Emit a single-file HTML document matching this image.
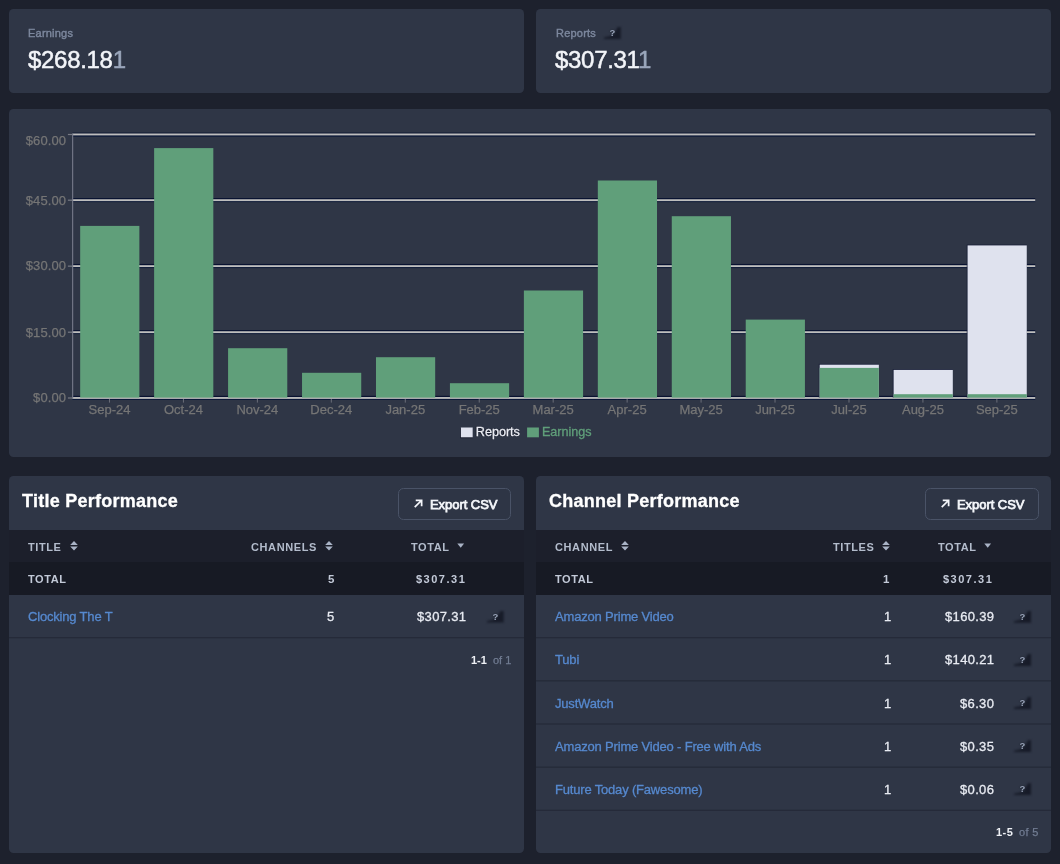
<!DOCTYPE html>
<html><head><meta charset="utf-8"><title>Dashboard</title><style>
html,body{margin:0;padding:0}
body{width:1060px;height:864px;background:#1d212d;position:relative;overflow:hidden;font-family:"Liberation Sans",sans-serif;}
.abs,.card,.t,.q,.btn,.sep,.chart{position:absolute}
.chart{left:0;top:0}
.card{background:#2f3646;border-radius:4.5px}
.t{white-space:nowrap;line-height:1;margin:0;padding:0;will-change:transform}
.lab{color:#7d889e;-webkit-text-stroke:0.4px #7d889e;letter-spacing:0.22px}
.big{color:#f3f5f9;letter-spacing:-0.3px;-webkit-text-stroke:0.5px #f3f5f9}
.big .dim{color:#9aa6bb;-webkit-text-stroke:0.5px #9aa6bb}
.h2{color:#fff;font-weight:bold;letter-spacing:0.25px;-webkit-text-stroke:0.3px #fff}
.btn{width:111.8px;height:29.6px;border:1px solid #4a5367;border-radius:5.5px;background:#2e3545}
.btnt{color:#f4f6fa;letter-spacing:-0.05px;-webkit-text-stroke:0.75px #f4f6fa}
.th{color:#b3bccc;font-weight:bold;letter-spacing:0.6px}
.tt{color:#c3cad8;font-weight:bold;letter-spacing:0.6px}
.ttn{letter-spacing:1.5px}
.lnk{color:#5689cf;letter-spacing:-0.18px;-webkit-text-stroke:0.3px #5689cf}
.num{color:#e8ebf2;letter-spacing:0.35px;-webkit-text-stroke:0.3px #e8ebf2}
.pg{color:#eef0f5;font-weight:bold;letter-spacing:0.5px}
.pgd{color:#717c92;letter-spacing:0.3px;-webkit-text-stroke:0.25px #717c92}
.sep{width:515px;height:1.2px;background:#262c3a}
.q{width:17px;height:12px}
.q i{position:absolute;left:-3px;top:-3px;width:23px;height:18px;filter:blur(1.3px)}
.q u{position:absolute;left:3px;top:3px;width:17px;height:12px;background:rgba(18,22,34,0.82);clip-path:polygon(0 100%,100% 100%,100% 0,82% 0,55% 70%,0 88%)}
.q b{will-change:transform;position:absolute;left:0;top:1.2px;width:17px;text-align:center;font-size:9.5px;line-height:10px;color:#9aa5ba;font-weight:bold;text-shadow:0 0 1.5px #141824}
</style></head><body>
<div class="card" style="left:9px;top:9px;width:515px;height:83.6px"></div>
<div class="card" style="left:536px;top:9px;width:515px;height:83.6px"></div>
<div class="card" style="left:9px;top:108.6px;width:1042px;height:348px"></div>
<div class="card" style="left:9px;top:476px;width:515px;height:376.8px"></div>
<div class="card" style="left:536px;top:476px;width:515px;height:376.8px"></div>
<div class="t lab" style="left:28.4px;top:28.00px;font-size:11px;">Earnings</div>
<div class="t big" style="left:28.3px;top:48.00px;font-size:24px;">$268.18<span class="dim">1</span></div>
<div class="t lab" style="left:555.5px;top:28.00px;font-size:11px;">Reports</div>
<div class="t big" style="left:555.4px;top:48.00px;font-size:24px;">$307.31<span class="dim">1</span></div>
<div class="q" style="left:603.8px;top:27.0px"><i><u></u></i><b>?</b></div>
<svg class="chart" width="1060" height="864" viewBox="0 0 1060 864">
<rect x="72.5" y="395.80" width="962.70" height="1.4" fill="#071230" opacity="0.95"/>
<rect x="72.5" y="398.90" width="962.70" height="1.1" fill="#081638" opacity="0.95"/>
<rect x="67.9" y="397.40" width="4.6" height="1.2" fill="#777a84"/>
<rect x="72.5" y="397.05" width="962.70" height="1.8" fill="#bebebe"/>
<rect x="72.5" y="330.00" width="962.70" height="1.4" fill="#071230" opacity="0.95"/>
<rect x="72.5" y="333.10" width="962.70" height="1.1" fill="#081638" opacity="0.7"/>
<rect x="67.9" y="331.60" width="4.6" height="1.2" fill="#777a84"/>
<rect x="72.5" y="331.25" width="962.70" height="1.8" fill="#bebebe"/>
<rect x="72.5" y="263.95" width="962.70" height="1.4" fill="#071230" opacity="0.95"/>
<rect x="72.5" y="267.05" width="962.70" height="1.1" fill="#081638" opacity="0.7"/>
<rect x="67.9" y="265.55" width="4.6" height="1.2" fill="#777a84"/>
<rect x="72.5" y="265.20" width="962.70" height="1.8" fill="#bebebe"/>
<rect x="72.5" y="198.00" width="962.70" height="1.4" fill="#071230" opacity="0.95"/>
<rect x="72.5" y="201.10" width="962.70" height="1.1" fill="#081638" opacity="0.7"/>
<rect x="67.9" y="199.60" width="4.6" height="1.2" fill="#777a84"/>
<rect x="72.5" y="199.25" width="962.70" height="1.8" fill="#bebebe"/>
<rect x="72.5" y="132.30" width="962.70" height="1.4" fill="#071230" opacity="0.55"/>
<rect x="72.5" y="135.40" width="962.70" height="1.3" fill="#081638" opacity="0.95"/>
<rect x="67.9" y="133.90" width="4.6" height="1.2" fill="#777a84"/>
<rect x="72.5" y="133.55" width="962.70" height="1.8" fill="#bebebe"/>
<rect x="72.1" y="133.60" width="1.1" height="265.30" fill="#777b8a"/>
<rect x="108.97" y="399.0" width="1" height="3.6" fill="#6a6d78"/>
<rect x="182.93" y="399.0" width="1" height="3.6" fill="#6a6d78"/>
<rect x="256.88" y="399.0" width="1" height="3.6" fill="#6a6d78"/>
<rect x="330.82" y="399.0" width="1" height="3.6" fill="#6a6d78"/>
<rect x="404.78" y="399.0" width="1" height="3.6" fill="#6a6d78"/>
<rect x="478.73" y="399.0" width="1" height="3.6" fill="#6a6d78"/>
<rect x="552.67" y="399.0" width="1" height="3.6" fill="#6a6d78"/>
<rect x="626.62" y="399.0" width="1" height="3.6" fill="#6a6d78"/>
<rect x="700.58" y="399.0" width="1" height="3.6" fill="#6a6d78"/>
<rect x="774.52" y="399.0" width="1" height="3.6" fill="#6a6d78"/>
<rect x="848.48" y="399.0" width="1" height="3.6" fill="#6a6d78"/>
<rect x="922.43" y="399.0" width="1" height="3.6" fill="#6a6d78"/>
<rect x="996.38" y="399.0" width="1" height="3.6" fill="#6a6d78"/>
<rect x="80.17" y="225.90" width="59.2" height="171.70" fill="#609f7a"/>
<rect x="154.12" y="148.10" width="59.2" height="249.50" fill="#609f7a"/>
<rect x="228.08" y="348.20" width="59.2" height="49.40" fill="#609f7a"/>
<rect x="302.03" y="372.80" width="59.2" height="24.80" fill="#609f7a"/>
<rect x="375.98" y="357.20" width="59.2" height="40.40" fill="#609f7a"/>
<rect x="449.93" y="383.20" width="59.2" height="14.40" fill="#609f7a"/>
<rect x="523.88" y="290.50" width="59.2" height="107.10" fill="#609f7a"/>
<rect x="597.82" y="180.50" width="59.2" height="217.10" fill="#609f7a"/>
<rect x="671.77" y="216.20" width="59.2" height="181.40" fill="#609f7a"/>
<rect x="745.73" y="319.60" width="59.2" height="78.00" fill="#609f7a"/>
<rect x="818.77" y="363.90" width="60.1" height="33.70" fill="#141a33" opacity="0.8"/>
<rect x="819.67" y="364.70" width="59.2" height="32.90" fill="#dfe2ee"/>
<rect x="819.67" y="367.90" width="59.2" height="29.70" fill="#609f7a"/>
<rect x="892.73" y="369.10" width="60.1" height="28.50" fill="#141a33" opacity="0.8"/>
<rect x="893.62" y="369.90" width="59.2" height="27.70" fill="#dfe2ee"/>
<rect x="893.62" y="394.20" width="59.2" height="3.40" fill="#609f7a"/>
<rect x="966.68" y="244.60" width="60.1" height="153.00" fill="#141a33" opacity="0.8"/>
<rect x="967.58" y="245.40" width="59.2" height="152.20" fill="#dfe2ee"/>
<rect x="967.58" y="394.20" width="59.2" height="3.40" fill="#609f7a"/>
<g font-family="Liberation Sans, sans-serif" font-size="13" fill="#757575" stroke="#757575" stroke-width="0.25">
<text x="109.47" y="414.2" text-anchor="middle">Sep-24</text>
<text x="183.43" y="414.2" text-anchor="middle">Oct-24</text>
<text x="257.38" y="414.2" text-anchor="middle">Nov-24</text>
<text x="331.32" y="414.2" text-anchor="middle">Dec-24</text>
<text x="405.28" y="414.2" text-anchor="middle">Jan-25</text>
<text x="479.23" y="414.2" text-anchor="middle">Feb-25</text>
<text x="553.17" y="414.2" text-anchor="middle">Mar-25</text>
<text x="627.12" y="414.2" text-anchor="middle">Apr-25</text>
<text x="701.08" y="414.2" text-anchor="middle">May-25</text>
<text x="775.02" y="414.2" text-anchor="middle">Jun-25</text>
<text x="848.98" y="414.2" text-anchor="middle">Jul-25</text>
<text x="922.93" y="414.2" text-anchor="middle">Aug-25</text>
<text x="996.88" y="414.2" text-anchor="middle">Sep-25</text>
<text x="66.2" y="402.30" text-anchor="end" letter-spacing="0.12">$0.00</text>
<text x="66.2" y="336.50" text-anchor="end" letter-spacing="0.12">$15.00</text>
<text x="66.2" y="270.45" text-anchor="end" letter-spacing="0.12">$30.00</text>
<text x="66.2" y="204.50" text-anchor="end" letter-spacing="0.12">$45.00</text>
<text x="66.2" y="144.50" text-anchor="end" letter-spacing="0.12">$60.00</text>
</g>
<rect x="460.2" y="428.2" width="12.4" height="10" fill="#141828"/>
<rect x="460.9" y="427.5" width="11.8" height="9.8" fill="#dfe2ee"/>
<rect x="527.1" y="427.5" width="11.8" height="9.8" fill="#609f7a"/>
<g font-family="Liberation Sans, sans-serif" font-size="12.6">
<text x="475.1" y="436.4" fill="#0c0f1a" stroke="#0c0f1a" stroke-width="0.5">Reports</text>
<text x="475.8" y="435.6" fill="#eceef5" stroke="#eceef5" stroke-width="0.3">Reports</text>
<text x="541.9" y="435.6" fill="#609f7a" stroke="#609f7a" stroke-width="0.3">Earnings</text>
</g>
</svg>
<div class="t h2" style="left:22.3px;top:492.00px;font-size:18px;">Title Performance</div>
<div class="btn" style="left:398.1px;top:488.1px;width:111.1px"></div>
<svg class="abs" style="left:414.4px;top:499.3px" width="9.2" height="9.2" viewBox="0 0 10 10"><path d="M0.8 8.9 L7.8 1.9 M1.9 1.4 L8.3 1.4 L8.3 7.8" stroke="#f4f6fa" stroke-width="1.9" fill="none" stroke-linecap="butt" stroke-linejoin="miter"/></svg>
<div class="t btnt" style="left:430.2px;top:498.00px;font-size:13px;">Export CSV</div>
<div class="abs" style="left:9px;top:530.1px;width:515px;height:32.2px;background:#1c1f2b"></div>
<div class="abs" style="left:9px;top:562.2px;width:515px;height:32.8px;background:#171a24"></div>
<div class="t h2" style="left:549.3px;top:492.00px;font-size:18px;">Channel Performance</div>
<div class="btn" style="left:925.1px;top:488.1px;width:111.6px"></div>
<svg class="abs" style="left:941.4px;top:499.3px" width="9.2" height="9.2" viewBox="0 0 10 10"><path d="M0.8 8.9 L7.8 1.9 M1.9 1.4 L8.3 1.4 L8.3 7.8" stroke="#f4f6fa" stroke-width="1.9" fill="none" stroke-linecap="butt" stroke-linejoin="miter"/></svg>
<div class="t btnt" style="left:957.2px;top:498.00px;font-size:13px;">Export CSV</div>
<div class="abs" style="left:536px;top:530.1px;width:515px;height:32.2px;background:#1c1f2b"></div>
<div class="abs" style="left:536px;top:562.2px;width:515px;height:32.8px;background:#171a24"></div>
<div class="t th" style="left:28.3px;top:542.00px;font-size:11px;">TITLE</div>
<svg class="abs" style="left:69.7px;top:541px" width="8" height="10" viewBox="0 0 8 10"><path d="M4 0 L7.8 4 L0.2 4 Z M0.2 5.6 L7.8 5.6 L4 9.6 Z" fill="#a9b3c6"/></svg>
<div class="t th" style="left:251.3px;top:542.00px;font-size:11px;">CHANNELS</div>
<svg class="abs" style="left:325.3px;top:541px" width="8" height="10" viewBox="0 0 8 10"><path d="M4 0 L7.8 4 L0.2 4 Z M0.2 5.6 L7.8 5.6 L4 9.6 Z" fill="#a9b3c6"/></svg>
<div class="t th" style="left:410.9px;top:542.00px;font-size:11px;">TOTAL</div>
<svg class="abs" style="left:457.3px;top:543.2px" width="8" height="6" viewBox="0 0 8 6"><path d="M0.3 0.4 L7.1 0.4 L3.7 4.8 Z" fill="#a9b3c6"/></svg>
<div class="t tt" style="left:28.3px;top:574.00px;font-size:11px;">TOTAL</div>
<div class="t tt ttn" style="right:724.2px;top:574.00px;font-size:11.5px;">5</div>
<div class="t tt ttn" style="right:593.7px;top:574.00px;font-size:11px;">$307.31</div>
<div class="t lnk" style="left:27.9px;top:610.00px;font-size:13px;">Clocking The T</div>
<div class="t num" style="right:725.6px;top:610.00px;font-size:13px;">5</div>
<div class="t num" style="right:593.6px;top:610.00px;font-size:13px;">$307.31</div>
<div class="q" style="left:486.7px;top:610.6px"><i><u></u></i><b>?</b></div>
<div class="t pg" style="right:572.9px;top:655.00px;font-size:11px;letter-spacing:0">1-1</div>
<div class="t pgd" style="right:549.0px;top:655.00px;font-size:11px;letter-spacing:0">of 1</div>
<div class="t th" style="left:555.1px;top:542.00px;font-size:11px;">CHANNEL</div>
<svg class="abs" style="left:621.1px;top:541px" width="8" height="10" viewBox="0 0 8 10"><path d="M4 0 L7.8 4 L0.2 4 Z M0.2 5.6 L7.8 5.6 L4 9.6 Z" fill="#a9b3c6"/></svg>
<div class="t th" style="left:833.1px;top:542.00px;font-size:11px;">TITLES</div>
<svg class="abs" style="left:882.2px;top:541px" width="8" height="10" viewBox="0 0 8 10"><path d="M4 0 L7.8 4 L0.2 4 Z M0.2 5.6 L7.8 5.6 L4 9.6 Z" fill="#a9b3c6"/></svg>
<div class="t th" style="left:938.1px;top:542.00px;font-size:11px;">TOTAL</div>
<svg class="abs" style="left:984.4px;top:543.2px" width="8" height="6" viewBox="0 0 8 6"><path d="M0.3 0.4 L7.1 0.4 L3.7 4.8 Z" fill="#a9b3c6"/></svg>
<div class="t tt" style="left:555.1px;top:574.00px;font-size:11px;">TOTAL</div>
<div class="t tt ttn" style="right:169.0px;top:574.00px;font-size:11.5px;">1</div>
<div class="t tt ttn" style="right:66.7px;top:574.00px;font-size:11px;">$307.31</div>
<div class="t lnk" style="left:555.4px;top:610.00px;font-size:13px;">Amazon Prime Video</div>
<div class="t num" style="right:168.8px;top:610.00px;font-size:13px;">1</div>
<div class="t num" style="right:65.7px;top:610.00px;font-size:13px;">$160.39</div>
<div class="q" style="left:1014.0px;top:610.7px"><i><u></u></i><b>?</b></div>
<div class="t lnk" style="left:555.4px;top:653.00px;font-size:13px;">Tubi</div>
<div class="t num" style="right:168.8px;top:653.00px;font-size:13px;">1</div>
<div class="t num" style="right:65.7px;top:653.00px;font-size:13px;">$140.21</div>
<div class="q" style="left:1014.0px;top:653.9px"><i><u></u></i><b>?</b></div>
<div class="t lnk" style="left:555.4px;top:697.00px;font-size:13px;">JustWatch</div>
<div class="t num" style="right:168.8px;top:697.00px;font-size:13px;">1</div>
<div class="t num" style="right:65.7px;top:697.00px;font-size:13px;">$6.30</div>
<div class="q" style="left:1014.0px;top:697.0px"><i><u></u></i><b>?</b></div>
<div class="t lnk" style="left:555.4px;top:740.00px;font-size:13px;">Amazon Prime Video - Free with Ads</div>
<div class="t num" style="right:168.8px;top:740.00px;font-size:13px;">1</div>
<div class="t num" style="right:65.7px;top:740.00px;font-size:13px;">$0.35</div>
<div class="q" style="left:1014.0px;top:740.2px"><i><u></u></i><b>?</b></div>
<div class="t lnk" style="left:555.4px;top:783.00px;font-size:13px;">Future Today (Fawesome)</div>
<div class="t num" style="right:168.8px;top:783.00px;font-size:13px;">1</div>
<div class="t num" style="right:65.7px;top:783.00px;font-size:13px;">$0.06</div>
<div class="q" style="left:1014.0px;top:783.3px"><i><u></u></i><b>?</b></div>
<svg class="chart" width="1060" height="864" viewBox="0 0 1060 864"><rect x="9" y="637.05" width="515" height="1.3" fill="#252b39"/><rect x="536" y="637.05" width="515" height="1.3" fill="#252b39"/><rect x="536" y="680.20" width="515" height="1.3" fill="#252b39"/><rect x="536" y="723.35" width="515" height="1.3" fill="#252b39"/><rect x="536" y="766.50" width="515" height="1.3" fill="#252b39"/><rect x="536" y="809.65" width="515" height="1.3" fill="#252b39"/></svg>
<div class="t pg" style="right:47.0px;top:827.00px;font-size:11px;">1-5</div>
<div class="t pgd" style="right:21.8px;top:827.00px;font-size:11px;">of 5</div>
</body></html>
